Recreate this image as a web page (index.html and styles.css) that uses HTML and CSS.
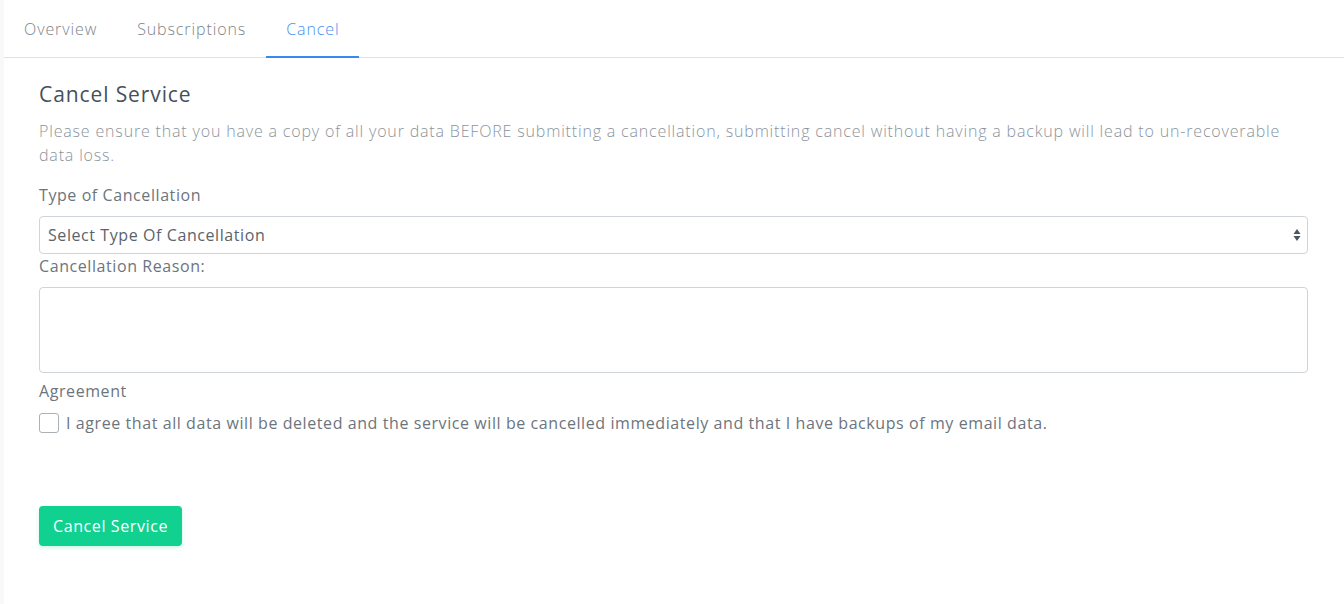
FILE: index.html
```html
<!DOCTYPE html>
<html lang="en">
<head>
<meta charset="UTF-8" />
<meta name="viewport" content="width=device-width, initial-scale=1" />
<title>Cancel Service</title>
<link rel="stylesheet" href="styles.css">
</head>
<body>

<div class="page">
  <nav class="tabs">
    <a href="#">Overview</a>
    <a href="#">Subscriptions</a>
    <a href="#" class="active">Cancel</a>
  </nav>

  <main class="content">
    <h2>Cancel Service</h2>
    <p class="note">Please ensure that you have a copy of all your data BEFORE submitting a cancellation, submitting cancel without having a backup will lead to un-recoverable data loss.</p>

    <form>
      <label for="cancel-type">Type of Cancellation</label>
      <div class="select-wrap">
        <select id="cancel-type">
          <option>Select Type Of Cancellation</option>
          <option>Immediate</option>
          <option>End of Billing Period</option>
        </select>
        <svg class="arrows" width="8" height="14" viewBox="0 0 8 14">
          <path d="M4 1 L7.5 6 L0.5 6 Z M4 13 L7.5 8 L0.5 8 Z" fill="#4a5560"/>
        </svg>
      </div>

      <label for="reason">Cancellation Reason:</label>
      <textarea id="reason"></textarea>

      <label>Agreement</label>
      <div class="agree">
        <input type="checkbox" id="agree">
        <label for="agree">I agree that all data will be deleted and the service will be cancelled immediately and that I have backups of my email data.</label>
      </div>

      <button type="submit">Cancel Service</button>
    </form>
  </main>
</div>

</body>
</html>
```

FILE: styles.css
```css
body { margin: 0; background: #f7f8fa; font-family: "Open Sans", sans-serif; color: #6c757d; letter-spacing: 0.58px; }
.page { margin-left: 4px; background: #fff; min-height: 604px; }

.tabs { display: flex; border-bottom: 1px solid #dee2e6; padding-left: 0; }
.tabs a {
  display: block; padding: 17px 20px 15px; font-size: 16px; line-height: 24px;
  color: #7b848c; text-decoration: none; border-bottom: 2px solid transparent;
  margin-bottom: -1px; font-weight: 300; letter-spacing: 0.9px;
}
.tabs a.active { color: #4a90f0; border-bottom-color: #3b86f3; }

.content { padding: 22px 36px 40px 35px; }
h2 { margin: 2px 0 12px; font-size: 21px; line-height: 25px; font-weight: 400; color: #45505a; letter-spacing: 0.9px; }
.note { margin: 0 0 16px; font-size: 16px; line-height: 24px; font-weight: 300; color: #8a949c; letter-spacing: 0.83px; }

form label { display: block; font-size: 16px; line-height: 24px; color: #6c757d; }
form > label { margin-bottom: 9px; }

.select-wrap { position: relative; }
select {
  display: block; width: 100%; height: 38px; padding: 0 24px 0 8px;
  border: 1px solid #ced4da; border-radius: 4px; background: #fff;
  font: inherit; font-size: 16px; color: #5a636b; letter-spacing: inherit;
  -webkit-appearance: none; appearance: none;
}
.arrows { position: absolute; right: 7px; top: 12px; }

textarea {
  display: block; width: 100%; box-sizing: border-box; height: 86px;
  border: 1px solid #ced4da; border-radius: 4px; resize: none;
  font: inherit; margin-bottom: 6px;
}

.agree { display: flex; align-items: center; gap: 7px; margin-top: -1px; }
.agree input {
  -webkit-appearance: none; appearance: none; margin: 0; width: 20px; height: 20px;
  border: 1px solid #a9b0b6; border-radius: 3px; background: #fff; flex: none;
}
.agree input:checked { background: #3b86f3; border-color: #3b86f3; }
.agree label { margin: 0; }

button {
  margin-top: 71px; padding: 8px 14px; font: inherit; font-size: 16px; line-height: 24px;
  letter-spacing: 0.6px; color: #fff; background: #10d18f; border: none; border-radius: 4px;
  cursor: pointer; box-shadow: 0 2px 4px rgba(16, 209, 143, 0.2);
}
button:hover { background: #0dbd81; }
```
